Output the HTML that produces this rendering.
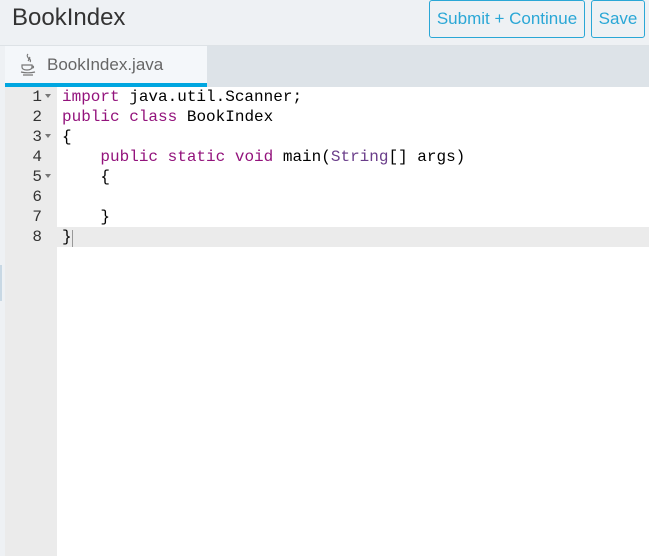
<!DOCTYPE html>
<html><head><style>
body{margin:0;width:649px;height:556px;overflow:hidden;background:#eef1f4;font-family:"Liberation Sans",sans-serif;position:relative}
.hdr{position:absolute;left:0;top:0;width:649px;height:45px;background:#eef1f4;border-bottom:1px solid #dde2e6}
.title{position:absolute;left:12px;top:4px;font-size:24px;color:#333}
.btn{position:absolute;top:0;height:36px;border:1px solid #2aa7d6;border-radius:3px;color:#2aa7d6;font-size:17px;line-height:36px;text-align:center;background:#eef1f4}
.tabbar{position:absolute;left:5px;top:46px;width:644px;height:41px;background:#dde3e8}
.tab{position:absolute;left:0;top:0;width:202px;height:37px;background:#f4f7fa;border-bottom:4px solid #00a6e0}
.tab span{position:absolute;left:42px;top:9px;font-size:17px;color:#666}
.edit{position:absolute;left:5px;top:87px;width:644px;height:469px;background:#fff}
.gut{position:absolute;left:0;top:0;width:52px;height:469px;background:#ebebeb}
.line{position:absolute;left:0;width:644px;height:20px;font-family:"Liberation Mono",monospace;font-size:16px;line-height:21px}
.ln{position:absolute;left:0;width:37px;text-align:right;color:#333}
.fold{position:absolute;left:40px;top:7px;width:0;height:0;border-left:3px solid transparent;border-right:3px solid transparent;border-top:4px solid #777}
.code{position:absolute;left:57px;white-space:pre;color:#000}
.k{color:#93137c}.t{color:#6a3d8a}
</style></head><body>
<div class="hdr"><div class="title">BookIndex</div>
<div class="btn" style="left:429px;width:154px">Submit + Continue</div>
<div class="btn" style="left:591px;width:52px">Save</div></div>
<div class="tabbar"><div class="tab">
<svg style="position:absolute;left:14px;top:7px" width="18" height="24" viewBox="0 0 18 24" fill="none" stroke="#777" stroke-width="1.2"><path d="M9 1c-3 3 3 4 0 7M11 4c-2 2 2 3 0 5"/><path d="M3 12h10v2c0 2-2 3-5 3s-5-1-5-3z"/><path d="M13 13c2 0 2 2 0 2"/><path d="M2 19c4 1 10 1 14 0M4 22h10"/></svg>
<span>BookIndex.java</span></div></div>
<div style="position:absolute;left:0;top:265px;width:2px;height:36px;background:#c8d8e4"></div>
<div class="edit"><div class="gut"></div>
<div class="line" style="top:140px;background:#ebebeb"></div>
<div class="line" style="top:0"><span class="ln">1</span><span class="fold"></span><span class="code"><span class="k">import</span> java.util.Scanner;</span></div>
<div class="line" style="top:20px"><span class="ln">2</span><span class="code"><span class="k">public</span> <span class="k">class</span> BookIndex</span></div>
<div class="line" style="top:40px"><span class="ln">3</span><span class="fold"></span><span class="code">{</span></div>
<div class="line" style="top:60px"><span class="ln">4</span><span class="code">    <span class="k">public</span> <span class="k">static</span> <span class="k">void</span> main(<span class="t">String</span>[] args)</span></div>
<div class="line" style="top:80px"><span class="ln">5</span><span class="fold"></span><span class="code">    {</span></div>
<div class="line" style="top:100px"><span class="ln">6</span></div>
<div class="line" style="top:120px"><span class="ln">7</span><span class="code">    }</span></div>
<div class="line" style="top:140px"><span class="ln">8</span><span class="code">}</span></div>
<div style="position:absolute;left:67px;top:143px;width:1px;height:17px;background:#999"></div>
</div>
</body></html>
